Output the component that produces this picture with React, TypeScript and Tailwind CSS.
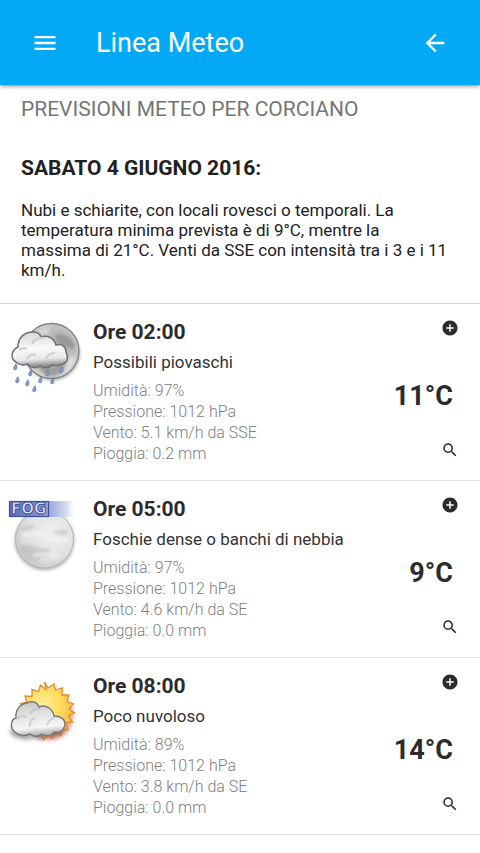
import React from 'react';
import { MdAddCircle, MdArrowBack, MdMenu, MdSearch } from 'react-icons/md';

const MoonRainIcon = () => (
  <svg viewBox="0 3 90 90" className="size-[90px]" role="img" aria-label="Possibili piovaschi">
    <defs>
      <radialGradient id="rain-moon" cx="0.55" cy="0.45" r="0.6">
        <stop offset="0" stopColor="#b2b2b2" />
        <stop offset="0.6" stopColor="#bcbcbc" />
        <stop offset="1" stopColor="#dedede" />
      </radialGradient>
      <linearGradient id="rain-cloud" x1="0" y1="0" x2="0.1" y2="1">
        <stop offset="0" stopColor="#d4d4d4" />
        <stop offset="0.5" stopColor="#fafafa" />
        <stop offset="0.8" stopColor="#e8e8e8" />
        <stop offset="1" stopColor="#8a8a8a" />
      </linearGradient>
      <filter id="rain-soft" x="-20%" y="-20%" width="140%" height="140%">
        <feGaussianBlur stdDeviation="1.6" />
      </filter>
      <filter id="rain-edge" x="-10%" y="-10%" width="120%" height="120%">
        <feGaussianBlur stdDeviation="0.5" />
      </filter>
    </defs>
    <circle cx="52.500" cy="43" r="27.500" fill="#999" opacity="0.7" filter="url(#rain-soft)" />
    <circle cx="51.500" cy="41" r="27.500" fill="url(#rain-moon)" stroke="#848484" strokeWidth="1.300" filter="url(#rain-edge)" />
    <g filter="url(#rain-soft)">
      <path d="M55 25q8-3 14 2l6 7q0 6-4 5-4-3-9-3-6-3-7-11z" fill="#8c8c8c" opacity="0.7" />
      <path d="M36 54q14 6 29 0l1 3q-7 9-15 10-9-2-15-13z" fill="#8c8c8c" opacity="0.7" />
      <path d="M35 24q8-7 16-7l-3 8z" fill="#e0e0e0" opacity="0.7" />
      <path d="M70 46q6 0 5 4-4 10-12 13z" fill="#e6e6e6" opacity="0.8" />
    </g>
    <g filter="url(#rain-edge)">
      <path
        d="M16 52c-6-3-5-12 2-15 0-9 6-15 15-15 5 0 7 2 8 5 7-2 13 1 15 8 6-2 10 2 10 7 3 6 1 11-3 12-4 2-8 2-11 1-3 4-9 3-12 1-4 3-10 2-12-2-4 2-9 1-12-2z"
        fill="url(#rain-cloud)"
        stroke="#707070"
        strokeWidth="1.500"
      />
      <path d="M19 40q4-3 8-1M32 34q3-7 12-6M27 49q3-6 9-4M46 49q2-6 9-6" fill="none" stroke="#cfcfcf" strokeWidth="2" />
    </g>
    <g fill="#8aa0cc" stroke="#5f76ac" strokeWidth="0.700">
      {[
        [15, 57], [30, 63], [47, 63], [61, 60], [17, 70], [27, 73], [40, 70], [52, 71], [34, 79],
      ].map(([x, y]) => (
        <path key={`${x}-${y}`} transform={`translate(${x} ${y})`} d="M1-3.300q1.600 3 .6 5.300-1.400 1.800-2.800.2-.8-1.700 2.200-5.500z" />
      ))}
    </g>
  </svg>
);

const MoonFogIcon = () => (
  <svg viewBox="0 0 90 90" className="size-[90px]" role="img" aria-label="Foschie dense o banchi di nebbia">
    <defs>
      <radialGradient id="fog-moon" cx="0.6" cy="0.4" r="0.65">
        <stop offset="0" stopColor="#efefef" />
        <stop offset="0.65" stopColor="#e2e2e2" />
        <stop offset="1" stopColor="#c8c8c8" />
      </radialGradient>
      <linearGradient id="fog-banner" x1="0" x2="1">
        <stop offset="0" stopColor="#5d70b6" />
        <stop offset="0.45" stopColor="#8292ca" />
        <stop offset="0.6" stopColor="#9dabd9" />
        <stop offset="0.85" stopColor="#d5dcf2" />
        <stop offset="1" stopColor="#ffffff" stopOpacity="0" />
      </linearGradient>
      <filter id="fog-soft" x="-20%" y="-20%" width="140%" height="140%">
        <feGaussianBlur stdDeviation="1.8" />
      </filter>
    </defs>
    <circle cx="44.500" cy="50.500" r="30" fill="#a0a0a0" opacity="0.75" filter="url(#fog-soft)" />
    <circle cx="44.500" cy="49" r="29" fill="url(#fog-moon)" stroke="#b5b5b5" />
    <g fill="#adadad" opacity="0.45" filter="url(#fog-soft)">
      <path d="M19 56q9-3 16 0 9 4 15 2l-2 8q-8-1-10 5-12 2-19-15z" />
      <path d="M20 39q6-5 16-4l-7 6zM51 43q8-5 18-2l-3 4z" />
    </g>
    <path d="M22 46q12-6 23 0t23 3M33 66q12-5 24 1" fill="none" stroke="#fafafa" strokeWidth="3" opacity="0.65" filter="url(#fog-soft)" />
    <rect x="9" y="11" width="68" height="16" fill="url(#fog-banner)" />
    <rect x="9.500" y="11.500" width="39" height="15" fill="none" stroke="#3d50a0" strokeWidth="1.200" />
    <text x="11" y="24" fontFamily="'DejaVu Sans', sans-serif" fontSize="15" fontWeight="700" fill="#e6ebff" stroke="#3d50a0" strokeWidth="1">
      FOG
    </text>
  </svg>
);

const SunCloudIcon = () => (
  <svg viewBox="0 -3 90 90" className="size-[90px]" role="img" aria-label="Poco nuvoloso">
    <defs>
      <radialGradient id="sun-disc" cx="0.42" cy="0.4" r="0.6">
        <stop offset="0" stopColor="#fff09a" />
        <stop offset="0.55" stopColor="#ffdc5c" />
        <stop offset="1" stopColor="#f9b93c" />
      </radialGradient>
      <linearGradient id="sun-cloud" x1="0" y1="0" x2="0.15" y2="1">
        <stop offset="0" stopColor="#c2c2c2" />
        <stop offset="0.45" stopColor="#e4e4e4" />
        <stop offset="0.8" stopColor="#f6f6f6" />
        <stop offset="1" stopColor="#b5b5b5" />
      </linearGradient>
      <filter id="sun-soft" x="-30%" y="-30%" width="160%" height="160%">
        <feGaussianBlur stdDeviation="2" />
      </filter>
      <filter id="sun-edge" x="-10%" y="-10%" width="120%" height="120%">
        <feGaussianBlur stdDeviation="0.4" />
      </filter>
    </defs>
    <circle cx="49" cy="46" r="24" fill="#f44336" opacity="0.55" filter="url(#sun-soft)" />
    <path
      d="M44.500 12l3.500 6 6-4 1.500 6 7-2-.5 7 7 0-2 6.500 6.500 2.500-4.500 5 5.500 4-6 3 4 6-6.500 1 2 7-6.500-1.500-1 7-5.500-3-3 6-4.500-4-4 5-3-6-6 3-1-7-7 1 1-6.500-6.500-1.500 4-5.500-6-4 5.500-3.500-4-6 6.500-1-2-6.500 7 .5 0-7 6.500 2 2-6.500 5.500 4.500z"
      fill="url(#sun-disc)"
      stroke="#df8d38"
      strokeWidth="1.300"
      filter="url(#sun-edge)"
    />
    <path d="M16 67q-7-1-5-9l5 2q16 11 46-3l3 5q-6 6-18 5-7 4-13 1-9 3-18-1z" fill="#555" opacity="0.6" filter="url(#sun-soft)" />
    <g filter="url(#sun-edge)">
      <path
        d="M15 62c-5-4-5-12 1-14-1-8 4-14 11-15 6-3 11 0 12 4 7-3 14 2 15 9 6 0 11 3 11 8-1 7-6 9-11 8-3 5-9 4-12 2-4 4-10 2-12 0-6 3-12 1-15-2z"
        fill="url(#sun-cloud)"
        stroke="#777777"
        strokeWidth="1.400"
      />
      <path d="M17 49q5-6 10-1M30 44q4-6 10-5M30 57q-1-7 5-9M47 55q3-7 8-7" fill="none" stroke="#bdbdbd" strokeWidth="2" opacity="0.6" />
    </g>
  </svg>
);

interface Forecast {
  hour: string;
  description: string;
  details: string[];
  temperature: string;
  icon: React.ReactNode;
}

const forecasts: Forecast[] = [
  {
    hour: '02:00',
    description: 'Possibili piovaschi',
    details: ['Umidità: 97%', 'Pressione: 1012 hPa', 'Vento: 5.1 km/h da SSE', 'Pioggia: 0.2 mm'],
    temperature: '11°C',
    icon: <MoonRainIcon />,
  },
  {
    hour: '05:00',
    description: 'Foschie dense o banchi di nebbia',
    details: ['Umidità: 97%', 'Pressione: 1012 hPa', 'Vento: 4.6 km/h da SE', 'Pioggia: 0.0 mm'],
    temperature: '9°C',
    icon: <MoonFogIcon />,
  },
  {
    hour: '08:00',
    description: 'Poco nuvoloso',
    details: ['Umidità: 89%', 'Pressione: 1012 hPa', 'Vento: 3.8 km/h da SE', 'Pioggia: 0.0 mm'],
    temperature: '14°C',
    icon: <SunCloudIcon />,
  },
];

const ForecastRow = ({ forecast }: { forecast: Forecast }) => (
  <li className="flex border-b border-[#e0e0e0] pt-[13px] pb-4">
    <div className="-mt-1 w-[93px] shrink-0">{forecast.icon}</div>
    <div className="min-w-0 flex-1">
      <h3 className="text-[21px] leading-[30px] font-bold text-[#2b2b2b]">Ore {forecast.hour}</h3>
      <p className="text-[17px] leading-[30px] text-[#333333]">{forecast.description}</p>
      <ul className="mt-[3px] text-base leading-[21px] font-light text-[#808080]">
        {forecast.details.map((detail) => (
          <li key={detail}>{detail}</li>
        ))}
      </ul>
    </div>
    <div className="flex shrink-0 flex-col items-end pt-[2px] pr-[21px]">
      <button type="button" aria-label="Aggiungi" className="text-[#2b2b2b]">
        <MdAddCircle className="size-[18px]" />
      </button>
      <span className="mt-11 pr-[6px] text-[27px] leading-[30px] font-bold text-[#2b2b2b]">{forecast.temperature}</span>
      <button type="button" aria-label="Dettagli" className="mt-[30px] text-[#2b2b2b]">
        <MdSearch className="size-[18px]" />
      </button>
    </div>
  </li>
);

const App = () => {
  return (
    <div className="min-h-screen bg-white font-[Roboto,sans-serif]">
      <header className="relative flex h-[85px] items-center bg-[#03a9f4] px-[31px] text-white shadow-[0_1px_4px_rgba(0,0,0,0.5)]">
        <button type="button" aria-label="Menu">
          <MdMenu className="size-7" />
        </button>
        <h1 className="ml-[37px] flex-1 text-[27px] leading-8">Linea Meteo</h1>
        <button type="button" aria-label="Indietro">
          <MdArrowBack className="size-7" />
        </button>
      </header>

      <main>
        <section className="border-b border-[#d0d0d0] px-[21px] pt-[9px] pb-[23px] text-[#212121]">
          <h2 className="text-[21px] leading-[30px] text-[#757575]">PREVISIONI METEO PER CORCIANO</h2>
          <h2 className="mt-[29px] text-[21px] leading-[30px] font-bold">SABATO 4 GIUGNO 2016:</h2>
          <p className="mt-[17px] pr-2 text-[17px] leading-5">
            Nubi e schiarite, con locali rovesci o temporali. La temperatura minima prevista è di 9°C, mentre la massima di
            21°C. Venti da SSE con intensità tra i 3 e i 11 km/h.
          </p>
        </section>

        <ul>
          {forecasts.map((forecast) => (
            <ForecastRow key={forecast.hour} forecast={forecast} />
          ))}
        </ul>
      </main>
    </div>
  );
};

export default App;
